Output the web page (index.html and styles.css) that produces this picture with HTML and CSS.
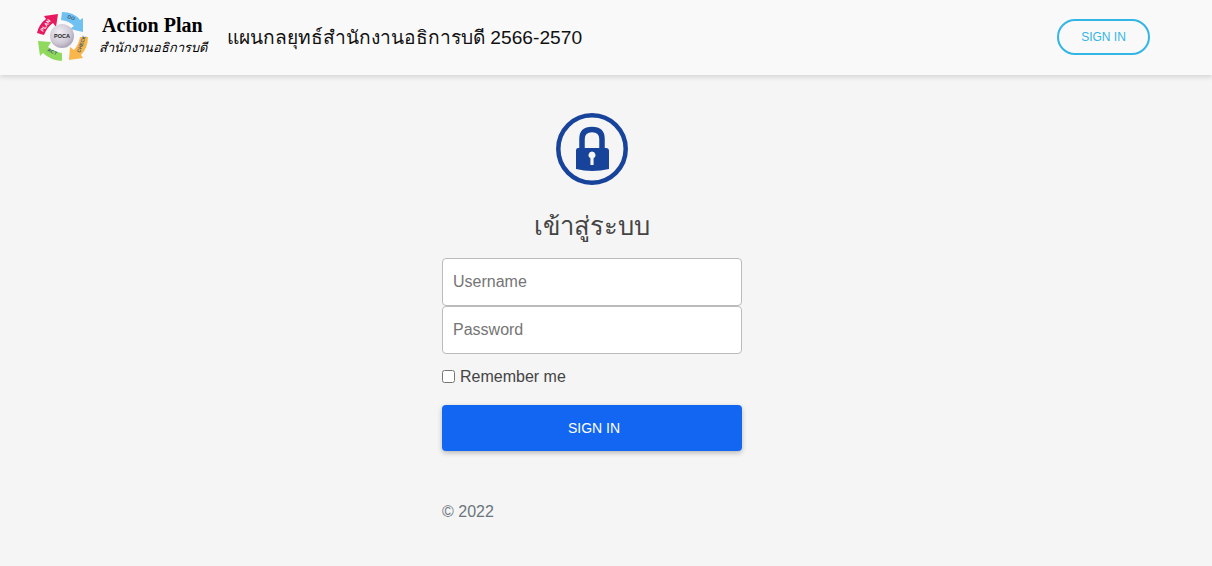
FILE: index.html
```html
<!DOCTYPE html>
<html>
<head>
  <title>Action Plan</title>
  <link rel="stylesheet" href="styles.css">
</head>
<body>
  <header class="topbar">
    <div class="brand">
      <svg class="brand-logo" viewBox="0 0 52 52" width="52" height="52">
        <defs>
          <radialGradient id="hub" cx="0.4" cy="0.35" r="0.75">
            <stop offset="0" stop-color="#f1eef3"/>
            <stop offset="0.6" stop-color="#cfc9d6"/>
            <stop offset="1" stop-color="#9d95aa"/>
          </radialGradient>
        </defs>
        <!-- four arrows of the PDCA wheel -->
        <path fill="#e8195f" d="M1 22 Q3 13 10 8 L8 5 L22 3 L20 16 L17 12 Q11 16 8 24 Z"/>
        <path fill="#6fc1f2" d="M26 1 Q38 1 44 9 L47 7 L47 21 L34 18 L38 15 Q33 10 25 9 Z"/>
        <path fill="#f9b64b" d="M44 26 L52 26 Q52 37 45 44 L47 47 L33 49 L34 36 L38 39 Q43 33 44 26 Z"/>
        <path fill="#8fd95c" d="M26 42 L26 50 Q14 49 7 42 L4 45 L2 30 L15 31 L12 36 Q18 41 26 42 Z"/>
        <circle cx="26" cy="25" r="12" fill="url(#hub)"/>
        <text x="26" y="27" class="logo-mid">POCA</text>
        <text x="7" y="21" class="logo-tag" transform="rotate(-55 7 21)">PLAN</text>
        <text x="31" y="7" class="logo-tag logo-dark" transform="rotate(20 31 7)">DO</text>
        <text x="44" y="42" class="logo-tag logo-dark" transform="rotate(-70 44 42)">CHECK</text>
        <text x="11" y="40" class="logo-tag logo-dark" transform="rotate(25 11 40)">ACT</text>
      </svg>
      <div class="brand-name">
        <div class="brand-en">Action Plan</div>
        <div class="brand-th">สำนักงานอธิการบดี</div>
      </div>
      <div class="brand-title">แผนกลยุทธ์สำนักงานอธิการบดี 2566-2570</div>
    </div>
    <a class="signin-link" href="#">SIGN IN</a>
  </header>

  <main class="login">
    <svg class="lock-icon" viewBox="0 0 72 72" width="72" height="72">
      <circle cx="36" cy="36" r="33.7" fill="none" stroke="#17439b" stroke-width="4.5"/>
      <path fill="none" stroke="#17439b" stroke-width="5.5" d="M26 36 V26 Q26 16.5 36 16.5 Q46 16.5 46 26 V36"/>
      <path fill="#17439b" fill-rule="evenodd" d="M22 35 H50 Q53 35 53 38 V56 Q36 60 20 56 V38 Q20 35 22 35 Z M36 38.5 a3.5 3.5 0 0 0 -1.6 6.6 V52 H37.6 V45.1 A3.5 3.5 0 0 0 36 38.5 Z"/>
    </svg>
    <h1 class="login-title">เข้าสู่ระบบ</h1>
    <form class="login-form">
      <input class="field" type="text" placeholder="Username">
      <input class="field" type="password" placeholder="Password">
      <label class="remember"><input type="checkbox"> Remember me</label>
      <button class="signin-btn" type="button">SIGN IN</button>
      <p class="copy">© 2022</p>
    </form>
  </main>
</body>
</html>
```

FILE: styles.css
```css
html, body {
  margin: 0;
  padding: 0;
}

body {
  background-color: #f5f5f5;
  color: #444;
  font-family: "Liberation Sans", "Noto Sans", sans-serif;
  height: 566px;
  overflow: hidden;
}

.topbar {
  box-sizing: border-box;
  display: flex;
  align-items: center;
  justify-content: space-between;
  height: 75px;
  padding: 0 62px 1px 36px;
  background-color: #f9f9f9;
  box-shadow: 0 2px 5px rgba(0, 0, 0, 0.14);
}

.brand {
  display: flex;
  align-items: center;
}

.brand-logo {
  display: block;
}

.brand-logo text {
  font-family: "Liberation Sans", sans-serif;
  font-weight: bold;
}

.logo-mid {
  font-size: 5.5px;
  fill: #222;
  text-anchor: middle;
}

.logo-tag {
  font-size: 5px;
  fill: #fff;
}

.logo-dark {
  fill: #3d5a6e;
}

.brand-name {
  margin-left: 11px;
  width: 117px;
  color: #000;
}

.brand-en {
  font-family: "Liberation Serif", serif;
  font-weight: bold;
  font-size: 20px;
  line-height: 22px;
  padding-left: 3px;
}

.brand-th {
  font-size: 12.8px;
  line-height: 24px;
  font-style: italic;
  white-space: nowrap;
}

.brand-title {
  margin-left: 11px;
  font-size: 19.2px;
  color: #111;
}

.signin-link {
  width: 89px;
  height: 32px;
  line-height: 32px;
  text-align: center;
  font-size: 12px;
  color: #33b5e5;
  text-decoration: none;
  border: 2px solid #33b5e5;
  border-radius: 18px;
}

.login {
  display: flex;
  flex-direction: column;
  align-items: center;
  padding: 38px 28px 0 0;
}

.lock-icon {
  display: block;
}

.login-title {
  margin: 22px 0 13px;
  font-size: 25.6px;
  line-height: 38px;
  font-weight: normal;
  color: #444;
}

.login-form {
  width: 300px;
  display: flex;
  flex-direction: column;
}

.field {
  box-sizing: border-box;
  width: 100%;
  height: 48px;
  padding: 0 10px;
  font-family: "Liberation Sans", sans-serif;
  font-size: 16px;
  background-color: #fff;
  border: 1px solid #bbb;
  border-radius: 4px;
  outline: none;
}

.field::placeholder {
  color: #757575;
}

.remember {
  display: flex;
  align-items: center;
  gap: 5px;
  margin-top: 13px;
  font-size: 16px;
  line-height: 20px;
  color: #444;
}

.remember input {
  margin: 0 0 2px;
  width: 13px;
  height: 13px;
}

.signin-btn {
  margin-top: 18px;
  height: 46px;
  padding-left: 10px;
  font-family: "Liberation Sans", sans-serif;
  font-size: 14px;
  color: #fff;
  background-color: #1266f1;
  border: none;
  border-radius: 4px;
  box-shadow: 0 2px 5px rgba(0, 0, 0, 0.25);
}

.copy {
  margin: 49px 0 0;
  font-size: 16px;
  line-height: 24px;
  color: #6c757d;
}
```
